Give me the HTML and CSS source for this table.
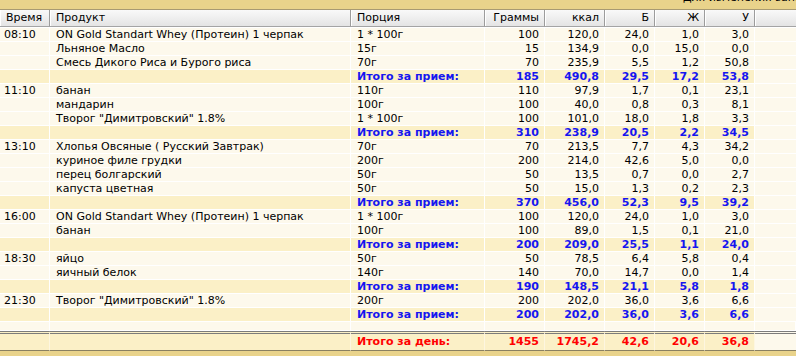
FILE: index.html
```html
<!DOCTYPE html>
<html lang="ru">
<head>
<meta charset="utf-8">
<title>Дневник питания</title>
<link rel="stylesheet" href="styles.css">
</head>
<body>
<div class="band-top"><span class="band-note">Для изменения записи выберите</span></div>
<table class="diary">
<colgroup>
<col class="c-time"><col class="c-prod"><col class="c-por"><col class="c-g"><col class="c-k"><col class="c-n"><col class="c-n"><col class="c-n"><col class="c-rest">
</colgroup>
<thead>
<tr><th class="l">Время</th><th class="l">Продукт</th><th class="l">Порция</th><th>Граммы</th><th>ккал</th><th>Б</th><th>Ж</th><th>У</th><th></th></tr>
</thead>
<tbody>
<tr><td class="t">08:10</td><td class="p">ON Gold Standart Whey (Протеин) 1 черпак</td><td class="p">1 * 100г</td><td>100</td><td>120,0</td><td>24,0</td><td>1,0</td><td>3,0</td><td class="e"></td></tr>
<tr><td class="t"></td><td class="p">Льняное Масло</td><td class="p">15г</td><td>15</td><td>134,9</td><td>0,0</td><td>15,0</td><td>0,0</td><td class="e"></td></tr>
<tr><td class="t"></td><td class="p">Смесь Дикого Риса и Бурого риса</td><td class="p">70г</td><td>70</td><td>235,9</td><td>5,5</td><td>1,2</td><td>50,8</td><td class="e"></td></tr>
<tr class="sum"><td></td><td></td><td class="p">Итого за прием:</td><td>185</td><td>490,8</td><td>29,5</td><td>17,2</td><td>53,8</td><td class="e"></td></tr>

<tr><td class="t">11:10</td><td class="p">банан</td><td class="p">110г</td><td>110</td><td>97,9</td><td>1,7</td><td>0,1</td><td>23,1</td><td class="e"></td></tr>
<tr><td class="t"></td><td class="p">мандарин</td><td class="p">100г</td><td>100</td><td>40,0</td><td>0,8</td><td>0,3</td><td>8,1</td><td class="e"></td></tr>
<tr><td class="t"></td><td class="p">Творог "Димитровский" 1.8%</td><td class="p">1 * 100г</td><td>100</td><td>101,0</td><td>18,0</td><td>1,8</td><td>3,3</td><td class="e"></td></tr>
<tr class="sum"><td></td><td></td><td class="p">Итого за прием:</td><td>310</td><td>238,9</td><td>20,5</td><td>2,2</td><td>34,5</td><td class="e"></td></tr>

<tr><td class="t">13:10</td><td class="p">Хлопья Овсяные ( Русский Завтрак)</td><td class="p">70г</td><td>70</td><td>213,5</td><td>7,7</td><td>4,3</td><td>34,2</td><td class="e"></td></tr>
<tr><td class="t"></td><td class="p">куриное филе грудки</td><td class="p">200г</td><td>200</td><td>214,0</td><td>42,6</td><td>5,0</td><td>0,0</td><td class="e"></td></tr>
<tr><td class="t"></td><td class="p">перец болгарский</td><td class="p">50г</td><td>50</td><td>13,5</td><td>0,7</td><td>0,0</td><td>2,7</td><td class="e"></td></tr>
<tr><td class="t"></td><td class="p">капуста цветная</td><td class="p">50г</td><td>50</td><td>15,0</td><td>1,3</td><td>0,2</td><td>2,3</td><td class="e"></td></tr>
<tr class="sum"><td></td><td></td><td class="p">Итого за прием:</td><td>370</td><td>456,0</td><td>52,3</td><td>9,5</td><td>39,2</td><td class="e"></td></tr>

<tr><td class="t">16:00</td><td class="p">ON Gold Standart Whey (Протеин) 1 черпак</td><td class="p">1 * 100г</td><td>100</td><td>120,0</td><td>24,0</td><td>1,0</td><td>3,0</td><td class="e"></td></tr>
<tr><td class="t"></td><td class="p">банан</td><td class="p">100г</td><td>100</td><td>89,0</td><td>1,5</td><td>0,1</td><td>21,0</td><td class="e"></td></tr>
<tr class="sum"><td></td><td></td><td class="p">Итого за прием:</td><td>200</td><td>209,0</td><td>25,5</td><td>1,1</td><td>24,0</td><td class="e"></td></tr>

<tr><td class="t">18:30</td><td class="p">яйцо</td><td class="p">50г</td><td>50</td><td>78,5</td><td>6,4</td><td>5,8</td><td>0,4</td><td class="e"></td></tr>
<tr><td class="t"></td><td class="p">яичный белок</td><td class="p">140г</td><td>140</td><td>70,0</td><td>14,7</td><td>0,0</td><td>1,4</td><td class="e"></td></tr>
<tr class="sum"><td></td><td></td><td class="p">Итого за прием:</td><td>190</td><td>148,5</td><td>21,1</td><td>5,8</td><td>1,8</td><td class="e"></td></tr>

<tr><td class="t">21:30</td><td class="p">Творог "Димитровский" 1.8%</td><td class="p">200г</td><td>200</td><td>202,0</td><td>36,0</td><td>3,6</td><td>6,6</td><td class="e"></td></tr>
<tr class="sum"><td></td><td></td><td class="p">Итого за прием:</td><td>200</td><td>202,0</td><td>36,0</td><td>3,6</td><td>6,6</td><td class="e"></td></tr>

<tr class="gap"><td></td><td></td><td></td><td></td><td></td><td></td><td></td><td></td><td></td></tr>
<tr class="day"><td></td><td></td><td class="p">Итого за день:</td><td>1455</td><td>1745,2</td><td>42,6</td><td>20,6</td><td>36,8</td><td class="e"></td></tr>
</tbody>
</table>
<div class="band-bottom"></div>
</body>
</html>
```

FILE: styles.css
```css
html, body {
  margin: 0;
  padding: 0;
  width: 796px;
  height: 356px;
  overflow: hidden;
  background: #e9d38b;
  font-family: "DejaVu Sans", Verdana, sans-serif;
  font-size: 11px;
  color: #000;
}

.band-top {
  height: 9px;
  background: #e9d38b;
  border-bottom: 1px solid #a89a72;
  overflow: hidden;
  padding-left: 683px;
  white-space: nowrap;
}

.band-note {
  display: block;
  margin-top: -8px;
  line-height: 12px;
  font-size: 11px;
  color: #000;
}

.diary {
  width: 796px;
  table-layout: fixed;
  border-collapse: separate;
  border-spacing: 0;
}

.c-time { width: 50px; }
.c-prod { width: 301px; }
.c-por { width: 134px; }
.c-g { width: 60px; }
.c-k { width: 60px; }
.c-n { width: 50px; }
.c-rest { width: 41px; }

.diary th {
  height: 16px;
  padding: 0 5px;
  font-weight: normal;
  text-align: right;
  line-height: 16px;
  background: linear-gradient(#f9f9f9, #e4e4e4);
  border-right: 1px solid #9c9c9c;
  border-bottom: 1px solid #a4a4a4;
  box-shadow: inset 1px 0 0 #ffffff;
  white-space: nowrap;
  overflow: hidden;
}

.diary th.l {
  text-align: left;
  padding-left: 6px;
}

.diary th:last-child {
  border-right: none;
}

.diary td {
  height: 12px;
  line-height: 12px;
  padding: 1px 5px 0 4px;
  text-align: right;
  white-space: nowrap;
  overflow: hidden;
  background: #fdf9ec;
  border-right: 1px solid #ffffff;
  border-bottom: 1px solid #ffffff;
}

.diary tbody tr:first-child td {
  border-top: 1px solid #ffffff;
}

.diary td.t {
  text-align: left;
  padding-left: 4px;
}

.diary td.p {
  text-align: left;
  padding-left: 6px;
}

.diary td.e {
  background: #fdf9ec;
  border-right: none;
}

.diary tr.sum td {
  background: #fbf0c7;
  color: #1616f0;
  font-weight: bold;
}

.diary tr.sum td.e {
  background: #fdf9ec;
}

.diary tr.gap td {
  height: 8px;
  line-height: 8px;
  padding-top: 0;
}

.diary tr.day td {
  height: 16px;
  line-height: 16px;
  padding-top: 0;
  background: #fbf0c7;
  color: #ff0000;
  font-weight: bold;
  border-top: 3px double #7c7c7c;
  border-bottom: 1px solid #8a8060;
  border-right-color: #fdf6e0;
}

.diary tr.day td.e {
  background: #fdf9ec;
}

.band-bottom {
  height: 6px;
  background: #e9d38b;
}
```
